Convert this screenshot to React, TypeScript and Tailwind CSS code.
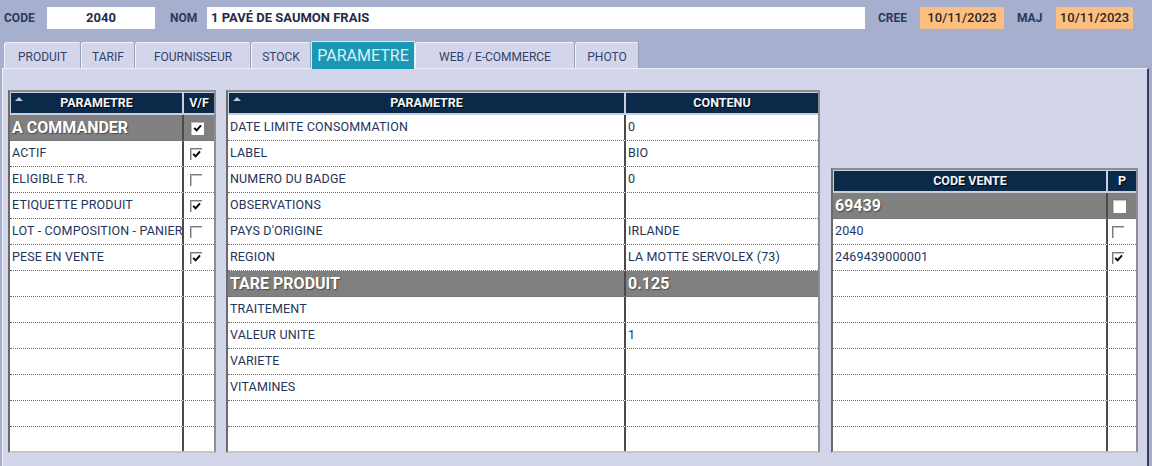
import React from "react";

type Row = { label?: string; value?: React.ReactNode; hl?: boolean };

function Check({ on, big }: { on?: boolean; big?: boolean }) {
  return (
    <div
      className={`${big ? "w-[14px] h-[14px]" : "w-[12px] h-[12px]"} bg-white border-t border-l border-[#7a7a7a] shadow-[inset_1px_1px_0_#c4c4c4] flex items-center justify-center`}
    >
      {on && (
        <svg width="9" height="8" viewBox="0 0 9 8">
          <path d="M1.2 3.8 L3.6 6.4 L8 1.4" fill="none" stroke="#000" strokeWidth="1.9" />
        </svg>
      )}
    </div>
  );
}

function Grid({
  w1,
  w2,
  h1,
  h2,
  rows,
  count,
  arrow,
  pad2,
}: {
  w1: string;
  w2: string;
  h1: string;
  h2: string;
  rows: Row[];
  count: number;
  arrow?: boolean;
  pad2: string;
}) {
  const filled: Row[] = [...rows, ...Array.from({ length: count - rows.length }, () => ({}))];
  return (
    <div className="h-full bg-white border-2 border-t-[#8c8c8c] border-l-[#6a6a6a] border-r-[#8f8f8f] border-b-[#c6c6c6] overflow-hidden flex flex-col">
      <div className="flex h-[23px] shrink-0 bg-[#0b2a4a] text-[#f2f5fa] text-[12.5px] font-bold [text-shadow:1px_1px_0_#000]">
        <div className={`relative ${w1} border-l border-t border-r-2 border-b-2 border-[#c9d0dc] flex items-center justify-center`}>
          {arrow && (
            <span className="absolute left-[4px] top-[4px] w-0 h-0 border-l-[4px] border-r-[4px] border-b-[4px] border-l-transparent border-r-transparent border-b-[#c3c8d2]" />
          )}
          {h1}
        </div>
        <div className={`${w2} border-t border-b-2 border-[#c9d0dc] flex items-center justify-center`}>{h2}</div>
      </div>
      {filled.map((r, i) => (
        <div
          key={i}
          className={`flex h-[26px] shrink-0 border-b border-dotted border-[#6a6a6a] ${
            r.hl
              ? "bg-[#808080] text-white text-[16px] font-bold [text-shadow:1px_1px_1px_#4a4a4a]"
              : "bg-white text-[#25345a] text-[12.5px] tracking-[0.15px]"
          }`}
        >
          <div className={`${w1} border-r-2 border-[#4a4a4a] pl-[2px] flex items-center whitespace-nowrap overflow-hidden`}>
            {r.label}
          </div>
          <div className={`${w2} ${pad2} flex items-center whitespace-nowrap overflow-hidden`}>{r.value}</div>
        </div>
      ))}
    </div>
  );
}

const tabs = [
  { t: "PRODUIT", w: "w-[77px]" },
  { t: "TARIF", w: "w-[54px]" },
  { t: "FOURNISSEUR", w: "w-[116px]" },
  { t: "STOCK", w: "w-[60px]" },
  { t: "PARAMETRE", w: "w-[104px]", active: true },
  { t: "WEB / E-COMMERCE", w: "w-[160px]" },
  { t: "PHOTO", w: "w-[64px]" },
];

export default function App() {
  const left: Row[] = [
    { label: "A COMMANDER", value: <Check on big />, hl: true },
    { label: "ACTIF", value: <Check on /> },
    { label: "ELIGIBLE T.R.", value: <Check /> },
    { label: "ETIQUETTE PRODUIT", value: <Check on /> },
    { label: "LOT - COMPOSITION - PANIER", value: <Check /> },
    { label: "PESE EN VENTE", value: <Check on /> },
  ];
  const mid: Row[] = [
    { label: "DATE LIMITE CONSOMMATION", value: "0" },
    { label: "LABEL", value: "BIO" },
    { label: "NUMERO DU BADGE", value: "0" },
    { label: "OBSERVATIONS", value: "" },
    { label: "PAYS D'ORIGINE", value: "IRLANDE" },
    { label: "REGION", value: "LA MOTTE SERVOLEX (73)" },
    { label: "TARE PRODUIT", value: "0.125", hl: true },
    { label: "TRAITEMENT", value: "" },
    { label: "VALEUR UNITE", value: "1" },
    { label: "VARIETE", value: "" },
    { label: "VITAMINES", value: "" },
  ];
  const right: Row[] = [
    { label: "69439", value: <Check big />, hl: true },
    { label: "2040", value: <Check /> },
    { label: "2469439000001", value: <Check on /> },
  ];

  return (
    <div className="w-[1152px] h-[466px] bg-[#a7afce] font-[Roboto,sans-serif] overflow-hidden flex flex-col">
      {/* header fields */}
      <div className="h-[36px] shrink-0 flex items-center pl-[4px] text-[12px] font-bold text-[#2a3a5c]">
        <span className="w-[43px]">CODE</span>
        <div className="w-[108px] h-[22px] bg-white flex items-center justify-center text-[13px] text-[#1f2b48]">2040</div>
        <span className="ml-[15px] w-[37px]">NOM</span>
        <div className="w-[658px] h-[22px] bg-white flex items-center pl-[4px] text-[13px] text-[#1f2b48]">
          1 PAVÉ DE SAUMON FRAIS
        </div>
        <span className="ml-[13px] w-[42px]">CREE</span>
        <div className="w-[84px] h-[22px] bg-[#fdbf80] flex items-center justify-center text-[13px] font-medium text-[#2a2a2a]">
          10/11/2023
        </div>
        <span className="ml-[13px] w-[39px]">MAJ</span>
        <div className="w-[77px] h-[22px] bg-[#fdbf80] flex items-center justify-center text-[13px] font-medium text-[#2a2a2a]">
          10/11/2023
        </div>
      </div>

      {/* tabs */}
      <div className="h-[32px] shrink-0 flex items-end pl-[4px] relative z-10">
        {tabs.map((tab) =>
          tab.active ? (
            <div
              key={tab.t}
              className={`${tab.w} h-[28px] mb-[-1px] bg-[#1a97b3] border border-b-0 border-[#e2eaf2] rounded-t-[2px] flex items-center justify-center text-[16px] text-[#daf0f7]`}
            >
              {tab.t}
            </div>
          ) : (
            <div
              key={tab.t}
              className={`${tab.w} h-[26px] bg-[#d3d6ea] border-t border-l border-r border-t-[#eef0f8] border-l-[#f2f3fa] border-r-[#9aa0b8] rounded-t-[3px] flex items-center justify-center pt-[2px] text-[12px] text-[#34416a]`}
            >
              {tab.t}
            </div>
          )
        )}
      </div>

      {/* panel */}
      <div className="flex-1 ml-[2px] w-[1147px] bg-[#d3d6ea] border-t border-l border-r-2 border-t-[#eef0f8] border-l-[#eef0f8] border-r-[#3a3e58] pl-[5px] pt-[21px] flex items-start">
        <div className="w-[208px] h-[363px]">
          <Grid w1="w-[174px]" w2="w-[30px]" h1="PARAMETRE" h2="V/F" rows={left} count={14} arrow pad2="pl-[6px]" />
        </div>
        <div className="ml-[10px] w-[594px] h-[363px]">
          <Grid w1="w-[398px]" w2="w-[192px]" h1="PARAMETRE" h2="CONTENU" rows={mid} count={14} arrow pad2="pl-[2px]" />
        </div>
        <div className="ml-[11px] mt-[78px] w-[307px] h-[285px]">
          <Grid w1="w-[275px]" w2="w-[28px]" h1="CODE VENTE" h2="P" rows={right} count={11} pad2="pl-[4px]" />
        </div>
      </div>
    </div>
  );
}
